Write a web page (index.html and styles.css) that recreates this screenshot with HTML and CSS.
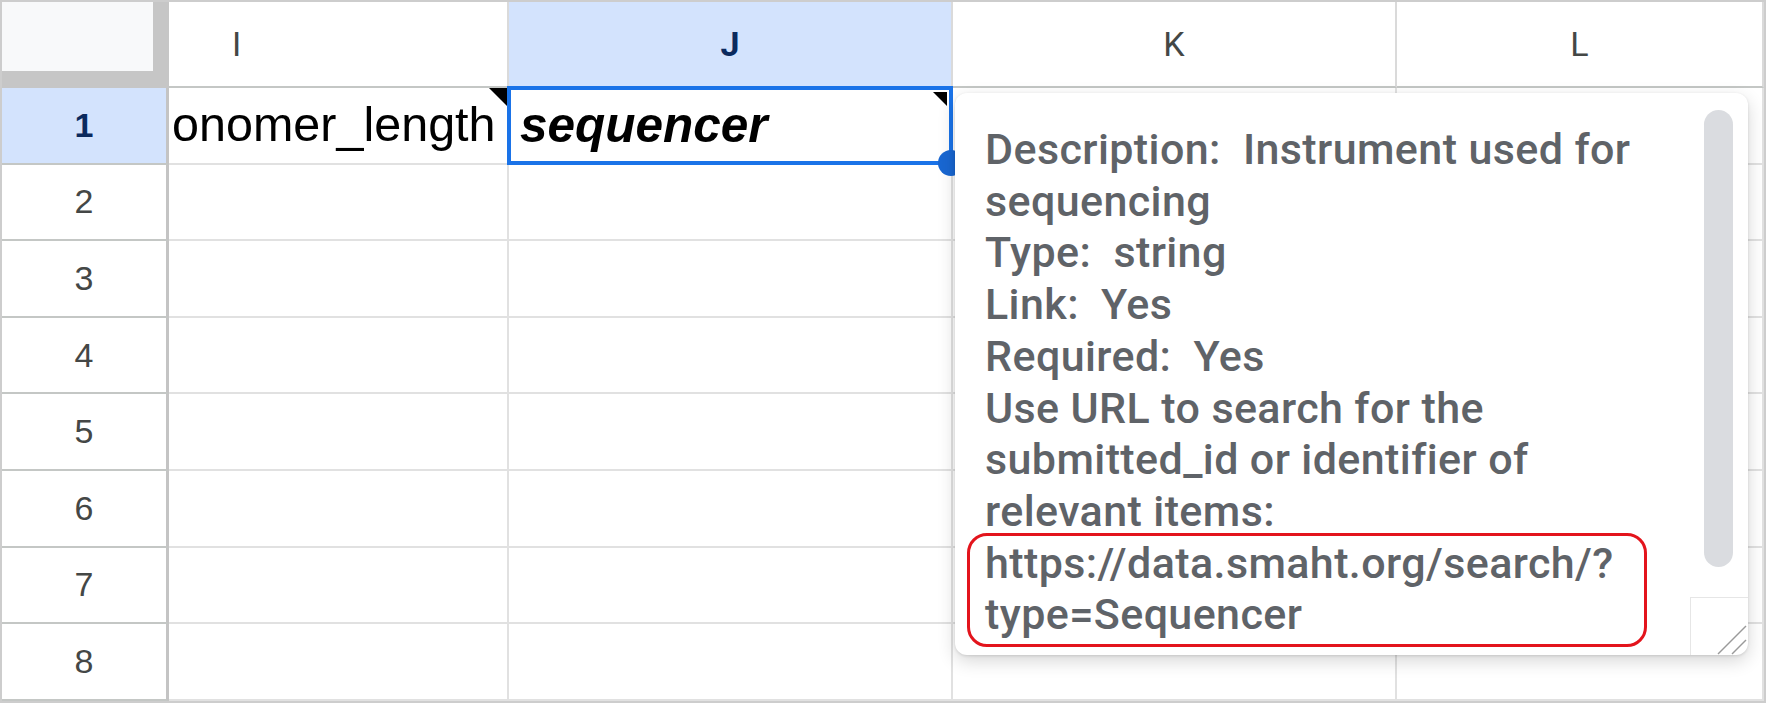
FILE: index.html
```html
<!DOCTYPE html>
<html>
<head>
<meta charset="utf-8">
<link rel="stylesheet" href="styles.css">
</head>
<body>
<div class="frame">
  <div class="sheet">
    <div class="corner"><div class="corner-box"></div></div>
    <div class="colhead colhead-i">I</div>
    <div class="colhead active">J</div>
    <div class="colhead">K</div>
    <div class="colhead">L</div>

    <div class="rowhead active">1</div>
    <div class="cell note"><span class="cell-text">onomer_length</span></div>
    <div class="cell note selected"><span class="cell-text strong">sequencer</span><span class="handle"></span></div>
    <div class="cell"></div>
    <div class="cell"></div>

    <div class="rowhead">2</div><div class="cell"></div><div class="cell"></div><div class="cell"></div><div class="cell"></div>
    <div class="rowhead">3</div><div class="cell"></div><div class="cell"></div><div class="cell"></div><div class="cell"></div>
    <div class="rowhead">4</div><div class="cell"></div><div class="cell"></div><div class="cell"></div><div class="cell"></div>
    <div class="rowhead">5</div><div class="cell"></div><div class="cell"></div><div class="cell"></div><div class="cell"></div>
    <div class="rowhead">6</div><div class="cell"></div><div class="cell"></div><div class="cell"></div><div class="cell"></div>
    <div class="rowhead">7</div><div class="cell"></div><div class="cell"></div><div class="cell"></div><div class="cell"></div>
    <div class="rowhead">8</div><div class="cell"></div><div class="cell"></div><div class="cell"></div><div class="cell"></div>
  </div>

  <div class="comment">
    <div class="comment-text">
      <div class="line">Description:  Instrument used for</div>
      <div class="line">sequencing</div>
      <div class="line">Type:  string</div>
      <div class="line">Link:  Yes</div>
      <div class="line">Required:  Yes</div>
      <div class="line">Use URL to search for the</div>
      <div class="line">submitted_id or identifier of</div>
      <div class="line">relevant items:</div>
      <div class="url-box">
        <div class="line">https://data.smaht.org/search/?</div>
        <div class="line">type=Sequencer</div>
      </div>
    </div>
    <div class="scrollbar"></div>
    <div class="resizer">
      <svg width="58" height="59" viewBox="0 0 58 59">
        <line x1="28" y1="58" x2="56" y2="30" stroke="#9a9a9a" stroke-width="1.5"/>
        <line x1="42" y1="58" x2="56" y2="44" stroke="#9a9a9a" stroke-width="1.5"/>
      </svg>
    </div>
  </div>
</div>
</body>
</html>
```

FILE: styles.css
```css
* { box-sizing: border-box; }
html, body { margin: 0; padding: 0; background: #ffffff; }
.frame {
  position: relative;
  width: 1766px;
  height: 703px;
  border: 2px solid #cdcdcd;
  overflow: hidden;
}
.sheet {
  display: grid;
  grid-template-columns: 167px 340px 444px 444px 1fr;
  grid-template-rows: 86px repeat(8, 76.6px);
  font-family: "Liberation Sans", Arial, sans-serif;
}
.corner {
  background: #c6c6c6;
  padding: 0 16px 17px 0;
}
.corner-box {
  width: 100%;
  height: 100%;
  background: #f8f9fa;
}
.colhead {
  display: flex;
  align-items: center;
  justify-content: center;
  font-family: Roboto, "Liberation Sans", sans-serif;
  font-size: 34px;
  color: #444746;
  border-right: 2px solid #dadada;
  border-bottom: 2px solid #c4c7c5;
  background: #ffffff;
}
.colhead-i { justify-content: flex-start; padding-left: 63px; }
.colhead.active {
  background: #d3e3fd;
  color: #0b2a5e;
  font-weight: 700;
}
.rowhead {
  display: flex;
  align-items: center;
  justify-content: center;
  font-size: 34px;
  color: #444746;
  background: #ffffff;
  border-right: 3px solid #c4c4c4;
  border-bottom: 2px solid #c4c7c5;
}
.rowhead.active {
  background: #d3e3fd;
  color: #0b2a5e;
  font-weight: 700;
}
.cell {
  position: relative;
  display: flex;
  align-items: center;
  border-right: 2px solid #e1e1e1;
  border-bottom: 2px solid #e1e1e1;
}
.cell-text {
  font-size: 48.5px;
  line-height: 1.15;
  color: #000000;
  padding-left: 3px;
  white-space: nowrap;
}
.cell-text.strong {
  font-weight: 700;
  font-style: italic;
  font-size: 49.5px;
  padding-left: 11px;
}
.cell.note::before {
  content: "";
  position: absolute;
  top: 0;
  right: 0;
  width: 0;
  height: 0;
  border-top: 18px solid #000000;
  border-left: 18px solid transparent;
  z-index: 2;
}
.cell.selected::before {
  top: 4px;
  right: 4px;
  border-top-width: 14px;
  border-left-width: 14px;
}
.cell.selected::after {
  content: "";
  position: absolute;
  left: -2px;
  top: -2px;
  right: -2px;
  bottom: -2px;
  border: 4px solid #1a73e8;
  z-index: 1;
}
.selected .cell-text { position: relative; z-index: 3; }
.handle {
  position: absolute;
  right: -13px;
  bottom: -13px;
  width: 26px;
  height: 26px;
  border-radius: 50%;
  background: #1967d2;
  z-index: 2;
}

.comment {
  position: absolute;
  left: 953px;
  top: 91px;
  width: 793px;
  height: 562px;
  background: #ffffff;
  border-radius: 12px;
  box-shadow: 0 6px 18px rgba(0,0,0,0.16), 0 1px 3px rgba(0,0,0,0.12);
  z-index: 5;
}
.comment-text {
  padding: 31px 0 0 30px;
  font-family: Roboto, "Liberation Sans", sans-serif;
  font-weight: 500;
  font-size: 43px;
  line-height: 51.7px;
  letter-spacing: 0.4px;
  color: #5f6368;
}
.line { white-space: pre; }
.url-box {
  width: 680px;
  margin: -5px 0 0 -18px;
  padding: 2px 0 3px 15px;
  border: 3px solid #e3141c;
  border-radius: 20px;
}
.scrollbar {
  position: absolute;
  left: 749px;
  top: 17px;
  width: 29px;
  height: 457px;
  border-radius: 15px;
  background: #dadce0;
}
.resizer {
  position: absolute;
  left: 735px;
  top: 504px;
  width: 58px;
  height: 58px;
  border-left: 1px solid #e6e6e6;
  border-top: 1px solid #e6e6e6;
  border-bottom-right-radius: 12px;
  overflow: hidden;
}
.resizer svg { display: block; position: absolute; right: 0; bottom: 0; }
```
